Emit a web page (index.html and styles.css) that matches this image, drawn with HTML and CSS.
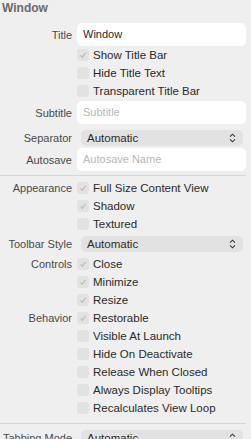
FILE: index.html
```html
<!DOCTYPE html>
<html lang="en">
<head>
    <meta charset="UTF-8">
    <meta name="viewport" content="width=device-width, initial-scale=1.0">
    <title>Window Inspector</title>
    <link rel="stylesheet" href="styles.css">
</head>
<body>
    <div class="panel">
        <h2 class="section-title">Window</h2>

        <div class="row field-row">
            <div class="label">Title</div>
            <div class="text-field">Window</div>
        </div>
        <div class="row check-row">
            <div class="label"></div>
            <span class="check checked"><svg viewBox="0 0 12 12"><path d="M3.5 6.3 L5.3 8.2 L8.6 3.8"/></svg></span>
            <span class="check-text">Show Title Bar</span>
        </div>
        <div class="row check-row">
            <div class="label"></div>
            <span class="check"></span>
            <span class="check-text">Hide Title Text</span>
        </div>
        <div class="row check-row">
            <div class="label"></div>
            <span class="check"></span>
            <span class="check-text">Transparent Title Bar</span>
        </div>

        <div class="row field-row gap-top-1">
            <div class="label">Subtitle</div>
            <div class="text-field placeholder">Subtitle</div>
        </div>
        <div class="row popup-row sep-top">
            <div class="label">Separator</div>
            <div class="popup">
                <span>Automatic</span>
                <svg class="chevron" viewBox="0 0 7 10"><path d="M1 3.6 L3.5 1.2 L6 3.6 M1 6.4 L3.5 8.8 L6 6.4"/></svg>
            </div>
        </div>
        <div class="row field-row gap-top-2">
            <div class="label">Autosave</div>
            <div class="text-field placeholder">Autosave Name</div>
        </div>

        <hr class="divider">

        <div class="row check-row">
            <div class="label">Appearance</div>
            <span class="check checked"><svg viewBox="0 0 12 12"><path d="M3.5 6.3 L5.3 8.2 L8.6 3.8"/></svg></span>
            <span class="check-text">Full Size Content View</span>
        </div>
        <div class="row check-row">
            <div class="label"></div>
            <span class="check checked"><svg viewBox="0 0 12 12"><path d="M3.5 6.3 L5.3 8.2 L8.6 3.8"/></svg></span>
            <span class="check-text">Shadow</span>
        </div>
        <div class="row check-row">
            <div class="label"></div>
            <span class="check"></span>
            <span class="check-text">Textured</span>
        </div>

        <div class="row popup-row toolbar-top">
            <div class="label">Toolbar Style</div>
            <div class="popup">
                <span>Automatic</span>
                <svg class="chevron" viewBox="0 0 7 10"><path d="M1 3.6 L3.5 1.2 L6 3.6 M1 6.4 L3.5 8.8 L6 6.4"/></svg>
            </div>
        </div>

        <div class="row check-row controls-top">
            <div class="label">Controls</div>
            <span class="check checked"><svg viewBox="0 0 12 12"><path d="M3.5 6.3 L5.3 8.2 L8.6 3.8"/></svg></span>
            <span class="check-text">Close</span>
        </div>
        <div class="row check-row">
            <div class="label"></div>
            <span class="check checked"><svg viewBox="0 0 12 12"><path d="M3.5 6.3 L5.3 8.2 L8.6 3.8"/></svg></span>
            <span class="check-text">Minimize</span>
        </div>
        <div class="row check-row">
            <div class="label"></div>
            <span class="check checked"><svg viewBox="0 0 12 12"><path d="M3.5 6.3 L5.3 8.2 L8.6 3.8"/></svg></span>
            <span class="check-text">Resize</span>
        </div>

        <div class="row check-row">
            <div class="label">Behavior</div>
            <span class="check checked"><svg viewBox="0 0 12 12"><path d="M3.5 6.3 L5.3 8.2 L8.6 3.8"/></svg></span>
            <span class="check-text">Restorable</span>
        </div>
        <div class="row check-row">
            <div class="label"></div>
            <span class="check"></span>
            <span class="check-text">Visible At Launch</span>
        </div>
        <div class="row check-row">
            <div class="label"></div>
            <span class="check"></span>
            <span class="check-text">Hide On Deactivate</span>
        </div>
        <div class="row check-row">
            <div class="label"></div>
            <span class="check"></span>
            <span class="check-text">Release When Closed</span>
        </div>
        <div class="row check-row">
            <div class="label"></div>
            <span class="check"></span>
            <span class="check-text">Always Display Tooltips</span>
        </div>
        <div class="row check-row">
            <div class="label"></div>
            <span class="check"></span>
            <span class="check-text">Recalculates View Loop</span>
        </div>

        <hr class="divider divider-low">

        <div class="row popup-row">
            <div class="label">Tabbing Mode</div>
            <div class="popup">
                <span>Automatic</span>
                <svg class="chevron" viewBox="0 0 7 10"><path d="M1 3.6 L3.5 1.2 L6 3.6 M1 6.4 L3.5 8.8 L6 6.4"/></svg>
            </div>
        </div>
    </div>
</body>
</html>
```

FILE: styles.css
```css
/* Light grey inspector panel */
body {
    margin: 0;
    background-color: #efefef;
    font-family: "Liberation Sans", Arial, sans-serif;
    font-size: 11px;
    color: #2a2a2a;
    overflow: hidden;
}

.panel {
    padding: 0 5px 0 0;
}

.section-title {
    margin: 0;
    padding: 2px 0 0 2px;
    height: 21px;
    line-height: 13px;
    font-size: 12px;
    font-weight: bold;
    color: #6a6a6a;
}

.row {
    display: flex;
    align-items: center;
}

.label {
    width: 72px;
    flex-shrink: 0;
    margin-right: 5px;
    text-align: right;
    color: #4a4a4a;
    white-space: nowrap;
}

/* Text fields */
.field-row {
    height: 23px;
}

.text-field {
    flex: 1;
    height: 23px;
    line-height: 23px;
    padding-left: 6px;
    background-color: #ffffff;
    border-radius: 5px;
    color: #2a2a2a;
}

.text-field.placeholder {
    color: #b8b8b8;
}

/* Checkboxes */
.check-row {
    height: 18px;
}

.check {
    width: 12px;
    height: 12px;
    border-radius: 3px;
    background-color: #e2e2e2;
    margin-right: 4px;
    flex-shrink: 0;
}

.check svg {
    display: block;
    width: 12px;
    height: 12px;
}

.check svg path {
    fill: none;
    stroke: #bdbdbd;
    stroke-width: 1.2;
}

.check-text {
    font-size: 11.5px;
    white-space: nowrap;
}

/* Popup buttons */
.popup-row {
    height: 16px;
}

.popup {
    flex: 1;
    height: 16px;
    margin: 0 3px 0 4px;
    padding: 0 7px 0 6px;
    border-radius: 5px;
    background-color: #e2e2e2;
    font-size: 11.5px;
    display: flex;
    align-items: center;
    justify-content: space-between;
}

.chevron {
    width: 7px;
    height: 10px;
}

.chevron path {
    fill: none;
    stroke: #3a3a3a;
    stroke-width: 1.1;
}

/* Vertical spacing tweaks */
.gap-top-1 {
    margin-top: 1px;
}

.sep-top {
    margin-top: 6px;
}

.gap-top-2 {
    margin-top: 2px;
}

.toolbar-top {
    margin-top: 3px;
}

.controls-top {
    margin-top: 3px;
}

.divider {
    border: none;
    border-top: 1px solid #d6d6d6;
    margin: 4px 0 3px 0;
}

.divider-low {
    margin: 6px 0 6px 0;
}
```
